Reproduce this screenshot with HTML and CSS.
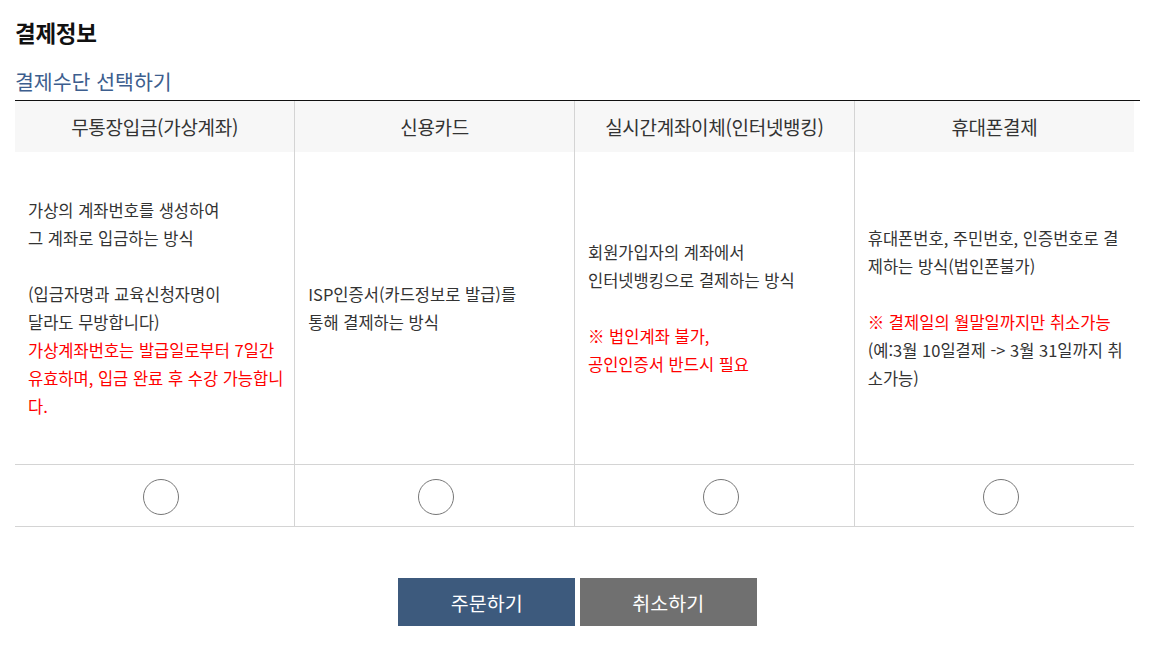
FILE: index.html
```html
<!DOCTYPE html>
<html lang="ko">
<head>
    <meta charset="UTF-8">
    <title>결제정보</title>
    <link rel="stylesheet" href="styles.css">
</head>
<body>
    <div id="content">
        <h2 class="title">결제정보</h2>
        <h3 class="sub-title">결제수단 선택하기</h3>

        <!-- 결제수단 -->
        <table class="pay-table">
            <thead>
                <tr>
                    <th>무통장입금(가상계좌)</th>
                    <th>신용카드</th>
                    <th>실시간계좌이체(인터넷뱅킹)</th>
                    <th>휴대폰결제</th>
                </tr>
            </thead>
            <tbody>
                <tr class="desc-row">
                    <td>
                        가상의 계좌번호를 생성하여<br>
                        그 계좌로 입금하는 방식<br>
                        <br>
                        (입금자명과 교육신청자명이<br>
                        달라도 무방합니다)<br>
                        <span class="red">가상계좌번호는 발급일로부터 7일간<br>유효하며, 입금 완료 후 수강 가능합니<br>다.</span>
                    </td>
                    <td>
                        ISP인증서(카드정보로 발급)를<br>
                        통해 결제하는 방식
                    </td>
                    <td>
                        회원가입자의 계좌에서<br>
                        인터넷뱅킹으로 결제하는 방식<br>
                        <br>
                        <span class="red">※ 법인계좌 불가,<br>공인인증서 반드시 필요</span>
                    </td>
                    <td>
                        휴대폰번호, 주민번호, 인증번호로 결<br>
                        제하는 방식(법인폰불가)<br>
                        <br>
                        <span class="red">※ 결제일의 월말일까지만 취소가능</span><br>
                        (예:3월 10일결제 -&gt; 3월 31일까지 취<br>
                        소가능)
                    </td>
                </tr>
                <tr class="radio-row">
                    <td><input type="radio" name="paytype" value="vbank"></td>
                    <td><input type="radio" name="paytype" value="card"></td>
                    <td><input type="radio" name="paytype" value="bank"></td>
                    <td><input type="radio" name="paytype" value="phone"></td>
                </tr>
            </tbody>
        </table>

        <div class="btn-area">
            <button type="button" class="btn btn-order">주문하기</button>
            <button type="button" class="btn btn-cancel">취소하기</button>
        </div>
    </div>
</body>
</html>
```

FILE: styles.css
```css
/* Reset */
body, h2, h3, table, th, td {
    margin: 0;
    padding: 0;
}

body {
    background: #ffffff;
    font-family: 'Noto Sans CJK KR', 'Noto Sans', sans-serif;
    color: #333;
}

#content {
    width: 1125px;
    padding: 0 0 0 15px;
}

.title {
    font-size: 22.5px;
    font-weight: bold;
    color: #111;
    line-height: 30px;
    padding-top: 17px;
    letter-spacing: -0.3px;
}

.sub-title {
    font-size: 20.5px;
    font-weight: normal;
    color: #3d5e8e;
    line-height: 28px;
    margin-top: 20px;
    padding-bottom: 5px;
    border-bottom: 1px solid #111;
}

/* 결제수단 테이블 */
.pay-table {
    width: 1119px;
    border-collapse: collapse;
    table-layout: fixed;
}

.pay-table th {
    height: 51px;
    background: #f7f7f7;
    font-size: 19px;
    font-weight: normal;
    color: #333;
    text-align: center;
    border-left: 1px solid #d4d4d4;
    letter-spacing: -0.3px;
}

.pay-table td {
    border-left: 1px solid #d4d4d4;
    border-bottom: 1px solid #d4d4d4;
}

.pay-table th:first-child,
.pay-table td:first-child {
    border-left: none;
}

.desc-row td {
    padding: 44px 6px 44px 13px;
    font-size: 16.5px;
    line-height: 28px;
    vertical-align: middle;
    color: #333;
}

.red {
    color: #ff0000;
}

.radio-row td {
    height: 61px;
    text-align: center;
    vertical-align: middle;
}

.radio-row input[type="radio"] {
    appearance: none;
    -webkit-appearance: none;
    width: 36px;
    height: 36px;
    margin: 2px 0 0 13px;
    border: 1px solid #777;
    border-radius: 50%;
    background: #fff;
    vertical-align: middle;
}

.radio-row td:nth-child(2) input[type="radio"] {
    margin-left: 2px;
}

/* 버튼 */
.btn-area {
    text-align: center;
    padding-top: 51px;
}

.btn {
    width: 177px;
    height: 48px;
    border: none;
    font-family: 'Noto Sans CJK KR', sans-serif;
    font-size: 19.5px;
    color: #fff;
    cursor: pointer;
}

.btn-order {
    background: #3d5a7d;
}

.btn-cancel {
    background: #707070;
}
```
